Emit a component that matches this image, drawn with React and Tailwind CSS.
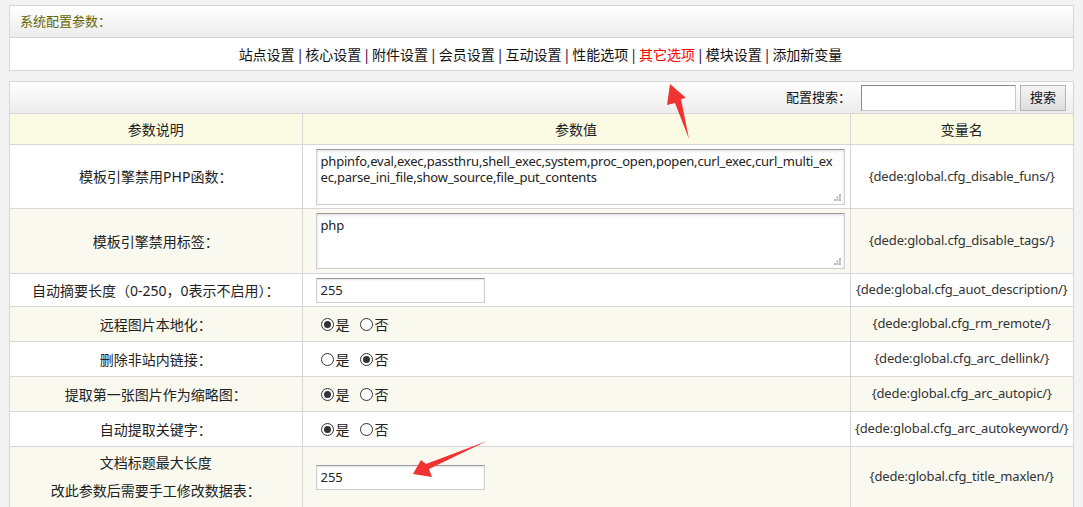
import React from "react";

const font = { fontFamily: "'Noto Sans', 'Noto Sans CJK SC', sans-serif" };

function Radio({ checked }) {
  return (
    <span className="inline-flex items-center justify-center w-[13px] h-[13px] rounded-full border border-[#333] bg-white mr-[2px]">
      {checked && <span className="w-[7px] h-[7px] rounded-full bg-[#333]" />}
    </span>
  );
}

function RadioPair({ yes }) {
  return (
    <div className="flex items-center pl-[5px] text-[14px] text-[#222]">
      <Radio checked={yes} />
      <span>是</span>
      <span className="w-[10px]" />
      <Radio checked={!yes} />
      <span>否</span>
    </div>
  );
}

function Grip() {
  return (
    <svg className="absolute right-[4px] bottom-[4px]" width="7" height="7" viewBox="0 0 7 7">
      <rect x="5" y="0" width="2" height="2" fill="#b8b8b8" />
      <rect x="2.5" y="2.5" width="2" height="2" fill="#b8b8b8" />
      <rect x="5" y="2.5" width="2" height="2" fill="#b8b8b8" />
      <rect x="0" y="5" width="2" height="2" fill="#b8b8b8" />
      <rect x="2.5" y="5" width="2" height="2" fill="#b8b8b8" />
      <rect x="5" y="5" width="2" height="2" fill="#b8b8b8" />
    </svg>
  );
}

const inputCls =
  "w-[169px] h-[25px] border border-[#cfcfcf] border-t-[#9a9a9a] bg-white px-[4px] text-[13px] text-[#222] shadow-[inset_0_1px_2px_rgba(0,0,0,0.12)] outline-none";

const taCls =
  "w-[529px] h-[56px] border border-[#cfcfcf] border-t-[#9a9a9a] bg-white pl-[4px] pr-[2px] pt-[3px] text-[13px] leading-[16px] tracking-[-0.2px] text-[#222] shadow-[inset_0_1px_3px_rgba(0,0,0,0.14)] outline-none resize-none overflow-hidden whitespace-pre block";

function TA({ value }) {
  return (
    <div className="relative w-[529px]">
      <textarea className={taCls} style={font} readOnly value={value} wrap="off" />
      <Grip />
    </div>
  );
}

const rows = [
  {
    label: "模板引擎禁用PHP函数：",
    h: "h-[64px]",
    bg: "bg-white",
    value: (
      <TA value={"phpinfo,eval,exec,passthru,shell_exec,system,proc_open,popen,curl_exec,curl_multi_ex\nec,parse_ini_file,show_source,file_put_contents"} />
    ),
    v: "{dede:global.cfg_disable_funs/}",
  },
  {
    label: "模板引擎禁用标签：",
    h: "h-[65px]",
    bg: "bg-[#f9f9ef]",
    value: <TA value="php" />,
    v: "{dede:global.cfg_disable_tags/}",
  },
  {
    label: "自动摘要长度（0-250，0表示不启用）：",
    h: "h-[33px]",
    bg: "bg-white",
    value: <input className={inputCls} style={font} readOnly value="255" />,
    v: "{dede:global.cfg_auot_description/}",
  },
  { label: "远程图片本地化：", h: "h-[35px]", bg: "bg-[#f9f9ef]", value: <RadioPair yes />, v: "{dede:global.cfg_rm_remote/}" },
  { label: "删除非站内链接：", h: "h-[35px]", bg: "bg-white", value: <RadioPair yes={false} />, v: "{dede:global.cfg_arc_dellink/}" },
  { label: "提取第一张图片作为缩略图：", h: "h-[35px]", bg: "bg-[#f9f9ef]", value: <RadioPair yes />, v: "{dede:global.cfg_arc_autopic/}" },
  { label: "自动提取关键字：", h: "h-[35px]", bg: "bg-white", value: <RadioPair yes />, v: "{dede:global.cfg_arc_autokeyword/}" },
  {
    label: (
      <div className="leading-[28px] py-[2px]">
        文档标题最大长度
        <br />
        改此参数后需要手工修改数据表：
      </div>
    ),
    h: "h-[60px]",
    bg: "bg-[#f9f9ef]",
    value: <input className={inputCls} style={font} readOnly value="255" />,
    v: "{dede:global.cfg_title_maxlen/}",
  },
];

const navItems = ["站点设置", "核心设置", "附件设置", "会员设置", "互动设置", "性能选项", "其它选项", "模块设置", "添加新变量"];

export default function App() {
  return (
    <div className="relative min-h-screen bg-[#f3f3f3] pt-[5px] px-[9px] text-[#222]" style={font}>
      {/* Panel 1 */}
      <div className="border border-[#d6d6d6] bg-white">
        <div className="h-[32px] flex items-center pl-[10px] bg-gradient-to-b from-white to-[#ececec] border-b border-[#d6d6d6] text-[13px] text-[#666600]">
          系统配置参数：
        </div>
        <div className="h-[32px] flex items-center justify-center text-[14px] text-[#111] pr-[2px]">
          {navItems.map((n, i) => (
            <React.Fragment key={n}>
              {i > 0 && <span className="text-[#3b0a3b] mx-[1.5px]">|</span>}
              <span className={n === "其它选项" ? "text-[#ff0000]" : ""}>{n}</span>
            </React.Fragment>
          ))}
        </div>
      </div>

      {/* Panel 2 */}
      <div className="mt-[10px] border border-[#d6d6d6] border-b-0 bg-white">
        <div className="h-[31px] flex items-center justify-end pr-[7px] bg-gradient-to-b from-white to-[#ececec] text-[13px] text-[#111]">
          <span>配置搜索：</span>
          <input
            className="ml-[10px] w-[155px] h-[26px] border border-[#c8c8c8] border-t-[#8a8a8a] border-l-[#8a8a8a] bg-white outline-none"
            readOnly
          />
          <button
            className="ml-[4px] w-[46px] h-[26px] border border-[#b5b5b5] bg-gradient-to-b from-[#f4f4f4] to-[#dedede] text-[13px] text-[#111]"
            style={font}
          >
            搜索
          </button>
        </div>
        <table className="w-full border-collapse text-[14px] text-[#222] table-fixed">
          <colgroup>
            <col className="w-[292px]" />
            <col className="w-[548px]" />
            <col />
          </colgroup>
          <thead>
            <tr className="h-[31px] bg-[#fbfbe3]">
              <th className="font-normal border-t border-[#d6d6d6] text-center">参数说明</th>
              <th className="font-normal border-t border-l border-[#d6d6d6] text-center">参数值</th>
              <th className="font-normal border-t border-l border-[#d6d6d6] text-center">变量名</th>
            </tr>
          </thead>
          <tbody>
            {rows.map((r, i) => (
              <tr key={i} className={`${r.h} ${r.bg}`}>
                <td className="border-t border-b border-[#d6d6d6] text-center align-middle p-0">{r.label}</td>
                <td className="border-t border-b border-l border-[#d6d6d6] align-middle pl-[13px] py-0">{r.value}</td>
                <td className="border-t border-b border-l border-[#d6d6d6] text-center align-middle p-0 text-[13px] text-[#333] tracking-[-0.15px]">{r.v}</td>
              </tr>
            ))}
          </tbody>
        </table>
      </div>

      {/* Annotation arrows */}
      <svg className="absolute left-0 top-0 pointer-events-none" width="1083" height="507" viewBox="0 0 1083 507">
        <polygon points="670,84 686,98 681,99 689,139 675,103 667,105" fill="#f13232" />
        <polygon points="413,474 421,460 426,464 487,441 429,469 432,477" fill="#f13232" />
      </svg>
    </div>
  );
}
